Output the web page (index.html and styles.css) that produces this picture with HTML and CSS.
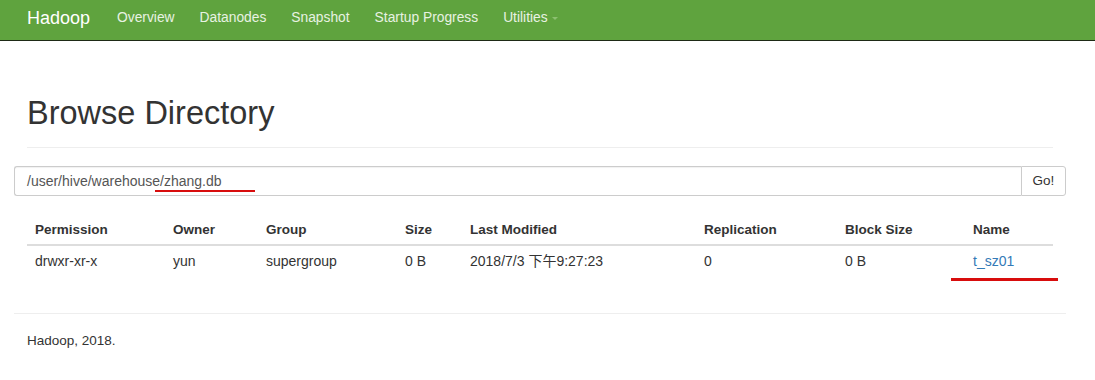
FILE: index.html
```html
<!DOCTYPE html>
<html>
<head>
<meta charset="utf-8">
<link rel="stylesheet" href="styles.css">
</head>
<body>
<nav class="navbar">
  <a class="brand">Hadoop</a>
  <ul class="nav">
    <li>Overview</li>
    <li>Datanodes</li>
    <li>Snapshot</li>
    <li>Startup Progress</li>
    <li>Utilities <span class="caret"></span></li>
  </ul>
</nav>
<main class="container">
  <div class="page-header"><h1>Browse Directory</h1></div>
  <div class="input-group">
    <div class="form-control">/user/hive/warehouse/zhang.db</div>
    <div class="btn">Go!</div>
    <span class="mark mark-path"></span>
  </div>
  <div class="table-wrap">
    <table class="table">
      <thead>
        <tr>
          <th class="c1">Permission</th>
          <th class="c2">Owner</th>
          <th class="c3">Group</th>
          <th class="c4">Size</th>
          <th class="c5">Last Modified</th>
          <th class="c6">Replication</th>
          <th class="c7">Block Size</th>
          <th class="c8">Name</th>
        </tr>
      </thead>
      <tbody>
        <tr>
          <td>drwxr-xr-x</td>
          <td>yun</td>
          <td>supergroup</td>
          <td>0 B</td>
          <td>2018/7/3 下午9:27:23</td>
          <td>0</td>
          <td>0 B</td>
          <td><a class="link">t_sz01</a></td>
        </tr>
      </tbody>
    </table>
    <span class="mark mark-name"></span>
  </div>
  <footer class="footer">
    <p>Hadoop, 2018.</p>
  </footer>
</main>
</body>
</html>
```

FILE: styles.css
```css
* { box-sizing: border-box; }
html, body { margin: 0; padding: 0; }
body {
  font-family: "Liberation Sans", Arial, "Noto Sans CJK SC", sans-serif;
  font-size: 14px;
  line-height: 20px;
  color: #333;
  background: #fff;
  width: 1095px;
  height: 380px;
  overflow: hidden;
}
.navbar {
  height: 41px;
  background: #5fa33e;
  border-bottom: 1px solid #1e2a16;
  display: flex;
  align-items: center;
  padding-left: 27px;
}
.brand {
  color: #fff;
  font-size: 18px;
  margin-right: 27px;
  padding-bottom: 4px;
}
.nav {
  list-style: none;
  margin: 0;
  padding: 0 0 4px 0;
  display: flex;
  gap: 25px;
  color: #e8f2e2;
  font-size: 13.8px;
}
.caret {
  display: inline-block;
  width: 0;
  height: 0;
  border-left: 3px solid transparent;
  border-right: 3px solid transparent;
  border-top: 3px solid #8cc070;
  vertical-align: middle;
  margin-left: 1px;
}
.container {
  padding: 0 29px 0 14px;
}
.page-header {
  margin: 0 13px;
  padding-top: 52px;
  padding-bottom: 14px;
  border-bottom: 1px solid #eee;
}
.page-header h1 {
  margin: 0;
  font-size: 32.5px;
  font-weight: 400;
  line-height: 40px;
  color: #333;
}
.input-group {
  position: relative;
  display: flex;
  margin-top: 18px;
  height: 30px;
}
.form-control {
  flex: 1;
  border: 1px solid #ccc;
  border-right: none;
  border-radius: 3px 0 0 3px;
  padding: 4px 12px;
  color: #555;
  box-shadow: inset 0 1px 1px rgba(0,0,0,0.06);
}
.btn {
  width: 45px;
  border: 1px solid #ccc;
  border-radius: 0 3px 3px 0;
  text-align: center;
  padding-top: 4px;
  color: #333;
  font-size: 13.5px;
}
.mark {
  position: absolute;
  background: #d80d0d;
}
.mark-path {
  left: 141px;
  top: 24px;
  width: 100px;
  height: 2px;
}
.table-wrap {
  position: relative;
  margin: 14px 13px 0 13px;
}
.table {
  width: 1026px;
  border-collapse: collapse;
  margin-bottom: 34px;
}
.table th, .table td {
  text-align: left;
  line-height: 20px;
  vertical-align: top;
}
.table th {
  padding: 10px 8px 4px 8px;
  font-weight: 700;
  border-bottom: 2px solid #ddd;
  font-size: 13.5px;
}
.table td {
  padding: 5px 8px 8px 8px;
  border-top: 1px solid #ddd;
}
.c1 { width: 138px; }
.c2 { width: 93px; }
.c3 { width: 139px; }
.c4 { width: 65px; }
.c5 { width: 234px; }
.c6 { width: 141px; }
.c7 { width: 128px; }
.c8 { width: 88px; }
.link { color: #337ab7; text-decoration: none; }
.mark-name {
  left: 924px;
  top: 68px;
  width: 107px;
  height: 3px;
}
.footer {
  border-top: 1px solid #eee;
  padding: 0 13px;
}
.footer p {
  margin: 17px 0 0 0;
  font-size: 13.5px;
  color: #333;
}
```
